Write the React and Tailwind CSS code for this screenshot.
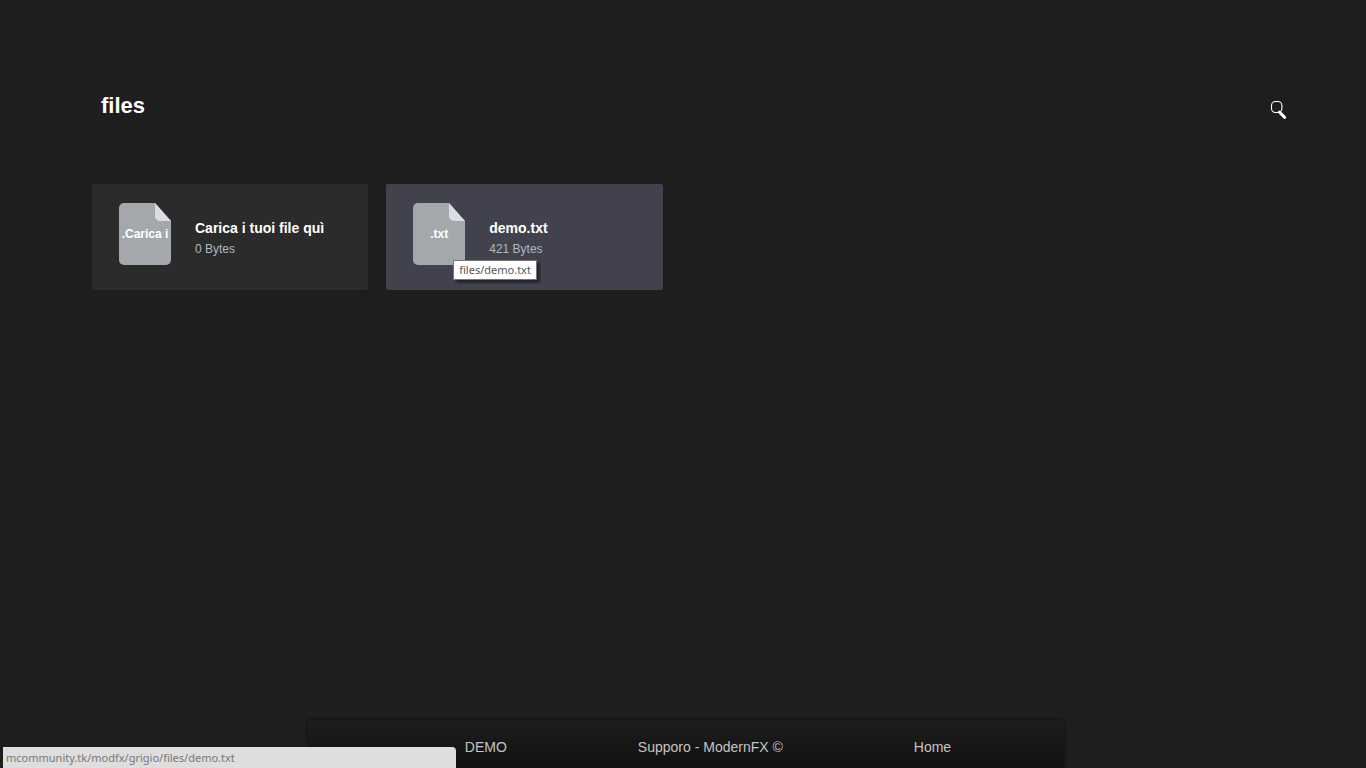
const files = [
  { name: "Carica i tuoi file quì", ext: ".Carica i", size: "0 Bytes", href: "#carica" },
  { name: "demo.txt", ext: ".txt", size: "421 Bytes", href: "#demo", active: true, path: "files/demo.txt" },
];

function FileIcon({ label }) {
  return (
    <span className="relative flex h-[62px] w-[52px] shrink-0 items-center justify-center">
      <svg className="absolute inset-0" width="52" height="62" viewBox="0 0 52 62" aria-hidden="true">
        <path d="M5 0H36L52 18V57a5 5 0 0 1-5 5H5a5 5 0 0 1-5-5V5a5 5 0 0 1 5-5Z" fill="#a4a7ac" />
        <path d="M36 0L52 18H41a5 5 0 0 1-5-5Z" fill="#dadde1" />
      </svg>
      <span className="relative text-xs font-bold whitespace-nowrap text-white">{label}</span>
    </span>
  );
}

function FileCard({ file }) {
  return (
    <li className="relative">
      <a
        href={file.href}
        className={`flex h-[106px] items-start rounded-xs pt-[19px] pl-[27px] ${file.active ? "bg-[#42424e]" : "bg-[#2b2b2b]"}`}
      >
        <FileIcon label={file.ext} />
        <span className="flex flex-col gap-px pt-[15px] pl-6">
          <span className="text-sm leading-5 font-bold text-white">{file.name}</span>
          <span className="text-xs leading-5 text-[#abbac3]">{file.size}</span>
        </span>
      </a>
      {file.path && (
        <span
          role="tooltip"
          className="absolute top-[76px] left-[67px] border border-[#767676] bg-white px-[5px] font-['Noto_Sans',sans-serif] text-[11px] leading-[18px] whitespace-nowrap text-[#575757] shadow-[3px_3px_2px_rgba(0,0,0,0.45)]"
        >
          {file.path}
        </span>
      )}
    </li>
  );
}

export default function App() {
  return (
    <div className="relative flex min-h-screen flex-col bg-[#1e1e1e] font-['Liberation_Sans',Arial,sans-serif]">
      <header className="flex items-start justify-between pt-[91px] pr-[79px] pl-[101px]">
        <h1 className="text-[22px] leading-[30px] font-bold text-white">files</h1>
        <button type="button" aria-label="Search" className="mt-[9px] cursor-pointer">
          <svg width="17" height="20" viewBox="0 0 17 20" fill="none" stroke="#fff">
            <rect x="1.5" y="1.5" width="10.4" height="11" rx="4" strokeWidth="1.1" />
            <path d="M9.4 12L14.6 17.4" strokeWidth="3" strokeLinecap="round" />
          </svg>
        </button>
      </header>

      <main className="flex-1 pt-[63px] pr-[115px] pl-[92px]">
        <ul className="grid grid-cols-4 gap-[18px]">
          {files.map((file) => (
            <FileCard key={file.name} file={file} />
          ))}
        </ul>
      </main>

      <div className="flex justify-center pl-[6px]">
        <footer className="flex h-12 w-full max-w-[756px] items-start justify-center gap-[131px] rounded-t-xs bg-linear-to-b from-[#1e1e1e] to-[#101010] pt-[17px] pl-11 text-sm leading-5 text-[#c4c4c4] shadow-[0_0_3px_#080808]">
          <a href="#demo-page">DEMO</a>
          <a href="#support">Supporo - ModernFX ©</a>
          <a href="#home">Home</a>
        </footer>
      </div>

      <div
        role="status"
        className="absolute bottom-0 left-[3px] h-[21px] w-[453px] rounded-tr-sm bg-[#dedede] pl-[3px] font-['Noto_Sans',sans-serif] text-[11px] leading-[22px] text-[#777]"
      >
        mcommunity.tk/modfx/grigio/files/demo.txt
      </div>
    </div>
  );
}
